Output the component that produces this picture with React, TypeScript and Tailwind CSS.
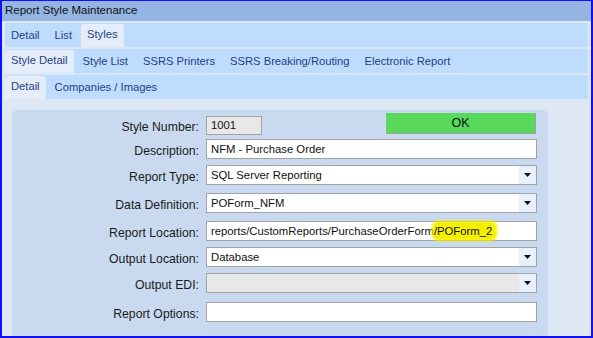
import React from "react";

const font = { fontFamily: '"Liberation Sans", Arial, sans-serif' };

const Tab = ({ label, active }: { label: string; active?: boolean }) => (
  <div
    className={
      active
        ? "flex items-center px-[6px] pb-[2px] mt-[1px] bg-[#e4edf9] rounded-t-[3px] text-[#1f3d8a]"
        : "flex items-center px-[6px] text-[#1f3d8a]"
    }
  >
    {label}
  </div>
);

const TabRow = ({ tabs, active }: { tabs: string[]; active: number }) => (
  <div className="flex h-[24px] bg-[#bedcfe] text-[11.2px] gap-[3px]">
    {tabs.map((t, i) => (
      <Tab key={t} label={t} active={i === active} />
    ))}
  </div>
);

const Arrow = () => (
  <div className="w-[17px] h-full bg-[#e8f0fb] flex items-center justify-center">
    <svg width="7" height="4" viewBox="0 0 7 4">
      <polygon points="0,0 7,0 3.5,4" fill="#111" />
    </svg>
  </div>
);

const Field = ({
  value,
  select,
  disabled,
  children,
}: {
  value?: string;
  select?: boolean;
  disabled?: boolean;
  children?: React.ReactNode;
}) => (
  <div
    className={`flex-1 h-[20px] border border-[#a3a3a3] flex items-center ${
      disabled ? "bg-[#e8e8e8]" : "bg-white"
    }`}
  >
    <div className="flex-1 pl-[4px] text-[11.3px] leading-[14px] text-[#111] whitespace-nowrap">{children ?? value}</div>
    {select && <Arrow />}
  </div>
);

const Row = ({ label, mt, children }: { label: string; mt: string; children: React.ReactNode }) => (
  <div className={`flex items-center h-[20px] ${mt}`}>
    <div className="w-[194px] pt-[4px] leading-[14px] text-right text-[12.25px] text-[#1a1a1a] pr-[7px]">{label}</div>
    {children}
  </div>
);

export default function App() {
  return (
    <div
      className="w-[593px] h-[338px] border-[#1010ff] border-2 border-t bg-[#dee8f5] flex flex-col overflow-hidden"
      style={font}
    >
      <div className="h-[20px] bg-[#94b4e1] flex items-center pl-[3px] text-[11.5px] text-[#111]">
        Report Style Maintenance
      </div>
      <div className="px-[3px] pt-[2px] flex flex-col gap-[2px]">
        <TabRow tabs={["Detail", "List", "Styles"]} active={2} />
        <TabRow
          tabs={["Style Detail", "Style List", "SSRS Printers", "SSRS Breaking/Routing", "Electronic Report"]}
          active={0}
        />
        <TabRow tabs={["Detail", "Companies / Images"]} active={0} />
      </div>
      <div className="flex-1 pl-[10px] pt-[11px]">
        <div className="w-[536px] h-full bg-[#c9daf0] rounded-t-[5px] pt-[3px] pr-[11px] flex flex-col">
          <div className="flex items-start h-[21px]">
            <div className="w-[194px] pt-[8px] leading-[13px] text-right text-[12.25px] text-[#1a1a1a] pr-[7px]">
              Style Number:
            </div>
            <div className="mt-[3px] w-[56px] h-[19px] bg-[#e8e8e8] border border-[#a3a3a3] pl-[4px] text-[11.3px] flex items-center text-[#111]">
              1001
            </div>
            <div className="ml-auto mr-[1px] w-[150px] h-[21px] bg-[#59d95b] border-r border-b border-[#a0a0a0] flex items-center justify-center text-[12.5px] text-[#111]">
              OK
            </div>
          </div>
          <Row label="Description:" mt="mt-[5px]">
            <Field value="NFM - Purchase Order" />
          </Row>
          <Row label="Report Type:" mt="mt-[6px]">
            <Field value="SQL Server Reporting" select />
          </Row>
          <Row label="Data Definition:" mt="mt-[8px]">
            <Field value="POForm_NFM" select />
          </Row>
          <Row label="Report Location:" mt="mt-[8px]">
            <Field>
              reports/CustomReports/PurchaseOrderForm
              <span className="bg-[#f5f000] rounded-[4px] pr-[3px] py-[2px] shadow-[0_0_3px_2px_#f5f000]">/POForm_2</span>
            </Field>
          </Row>
          <Row label="Output Location:" mt="mt-[6px]">
            <Field value="Database" select />
          </Row>
          <Row label="Output EDI:" mt="mt-[6px]">
            <Field value="" select disabled />
          </Row>
          <Row label="Report Options:" mt="mt-[9px]">
            <Field value="" />
          </Row>
        </div>
      </div>
    </div>
  );
}
